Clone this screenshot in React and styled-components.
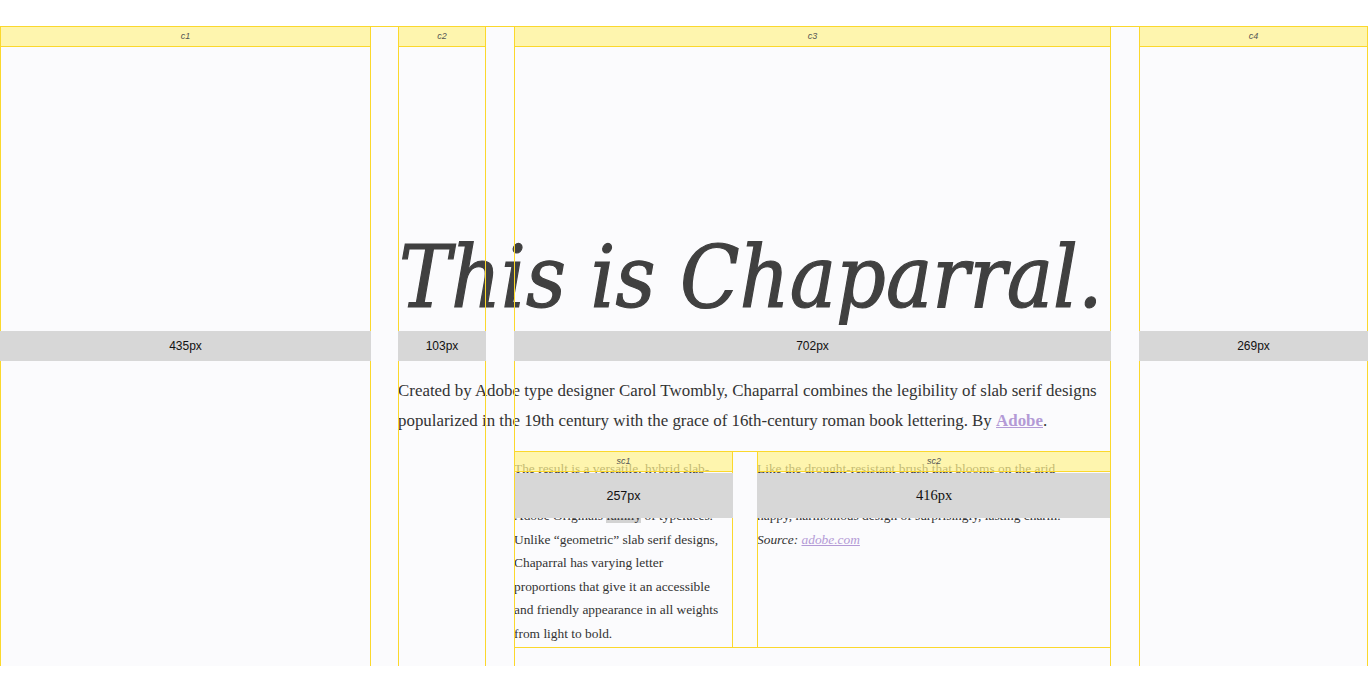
import React from "react";
import styled, { createGlobalStyle } from "styled-components";

const YELLOW = "#fbd82c";
const HEADER_BG = "rgba(255, 242, 140, 0.7)";
const BAR_BG = "#d7d7d7";
const LINK = "#b39ad6";

const GlobalStyle = createGlobalStyle`
  html, body { margin: 0; padding: 0; background: #ffffff; }
  body { font-family: "Liberation Serif", serif; color: #333; }
  * { box-sizing: border-box; }
`;

const Page = styled.div`
  padding-top: 26px;
  height: 675px;
  overflow: hidden;
`;

const Frame = styled.div`
  display: grid;
  grid-template-columns: 371px 27px 88px 28px 597px 28px 229px;
  grid-template-rows: 20px 284px 30px 90px 197px 18px;
  width: 1368px;
  background: #fbfbfd;
  border-top: 1px solid ${YELLOW};
`;

/* ---------- content ---------- */
const Heading = styled.h1`
  grid-column: 3 / 6;
  grid-row: 2;
  align-self: end;
  margin: 0 0 11px 1px;
  font-family: "DejaVu Serif Condensed", "DejaVu Serif", serif;
  font-stretch: condensed;
  font-style: italic;
  font-weight: 400;
  font-size: 86.5px;
  line-height: 1;
  color: #404040;
  -webkit-text-stroke: 1.2px #404040;
  white-space: nowrap;
`;

const Intro = styled.p`
  grid-column: 3 / 6;
  grid-row: 4;
  margin: 0;
  padding-top: 15px;
  font-size: 16.9px;
  line-height: 30px;
  color: #333;
`;

const Link = styled.a`
  color: ${LINK};
  font-weight: ${(p) => (p.$bold ? 700 : 400)};
  text-decoration: underline;
`;

/* ---------- overlay columns ---------- */
const Column = styled.div`
  grid-column: ${(p) => p.$col};
  grid-row: 1 / -1;
  display: grid;
  grid-template-rows: 20px 284px 30px 1fr;
  border-left: 1px solid ${YELLOW};
  border-right: 1px solid ${YELLOW};
`;

const ColHeader = styled.div`
  grid-row: 1;
  background: ${HEADER_BG};
  border-bottom: 1px solid ${YELLOW};
  font-family: "Liberation Sans", sans-serif;
  font-style: italic;
  font-size: 9px;
  line-height: 19px;
  color: #555;
  text-align: center;
`;

const ColBar = styled.div`
  grid-row: 3;
  margin: 0 -1px;
  background: ${BAR_BG};
  display: flex;
  align-items: center;
  justify-content: center;
  font-family: "Liberation Sans", sans-serif;
  font-size: 12px;
  color: #111;
`;

/* ---------- sub grid ---------- */
const SubGrid = styled.div`
  grid-column: 5;
  grid-row: 5;
  display: grid;
  grid-template-columns: 219px 24px 354px;
  grid-template-rows: 20px 1px 45px 1fr;
  border-top: 1px solid ${YELLOW};
  border-bottom: 1px solid ${YELLOW};
`;

const SubText = styled.div`
  grid-column: ${(p) => p.$col};
  grid-row: 1 / -1;
  padding-top: 5px;
  font-size: 13.4px;
  line-height: 23.5px;
  color: #333;
  white-space: nowrap;
  overflow: hidden;

  p { margin: 0; }
`;

const Mark = styled.span`
  background: #d3d3d3;
`;

const Source = styled.p`
  font-style: italic;
`;

const SubColumn = styled.div`
  grid-column: ${(p) => p.$col};
  grid-row: 1 / -1;
  display: grid;
  grid-template-rows: 20px 1px 45px 1fr;
  border-left: 1px solid ${YELLOW};
  border-right: 1px solid ${YELLOW};
`;

const SubBar = styled.div`
  grid-row: 3;
  margin: 0 -1px;
  background: ${BAR_BG};
  display: flex;
  align-items: center;
  justify-content: center;
  font-family: ${(p) =>
    p.$serif ? `"Liberation Serif", serif` : `"Liberation Sans", sans-serif`};
  font-size: ${(p) => (p.$serif ? "14.5px" : "12.5px")};
  color: #111;
`;

const columns = [
  { col: 1, name: "c1", px: "435px" },
  { col: 3, name: "c2", px: "103px" },
  { col: 5, name: "c3", px: "702px" },
  { col: 7, name: "c4", px: "269px" },
];

const subColumns = [
  { col: 1, name: "sc1", px: "257px", serif: false },
  { col: 3, name: "sc2", px: "416px", serif: true },
];

export default function App() {
  return (
    <Page>
      <GlobalStyle />
      <Frame>
        <Heading>This is Chaparral.</Heading>
        <Intro>
          Created by Adobe type designer Carol Twombly, Chaparral combines the
          legibility of slab serif designs popularized in the 19th century with
          the grace of 16th-century roman book lettering. By{" "}
          <Link $bold href="#">Adobe</Link>.
        </Intro>

        <SubGrid>
          <SubText $col={1}>
            <p>
              The result is a versatile, hybrid slab-
              <br />
              serif design that is part of the
              <br />
              Adobe Originals <Mark>family</Mark> of typefaces.
              <br />
              Unlike “geometric” slab serif designs,
              <br />
              Chaparral has varying letter
              <br />
              proportions that give it an accessible
              <br />
              and friendly appearance in all weights
              <br />
              from light to bold.
            </p>
          </SubText>
          <SubText $col={3}>
            <p>
              Like the drought-resistant brush that blooms on the arid
              <br />
              California hillsides, Chaparral is a sturdy, warm and
              <br />
              happy, harmonious design of surprisingly, lasting charm.
            </p>
            <Source>
              Source: <Link href="#">adobe.com</Link>
            </Source>
          </SubText>
          {subColumns.map((c) => (
            <SubColumn key={c.name} $col={c.col}>
              <ColHeader>{c.name}</ColHeader>
              <SubBar $serif={c.serif}>{c.px}</SubBar>
            </SubColumn>
          ))}
        </SubGrid>

        {columns.map((c) => (
          <Column key={c.name} $col={c.col}>
            <ColHeader>{c.name}</ColHeader>
            <ColBar>{c.px}</ColBar>
          </Column>
        ))}
      </Frame>
    </Page>
  );
}
